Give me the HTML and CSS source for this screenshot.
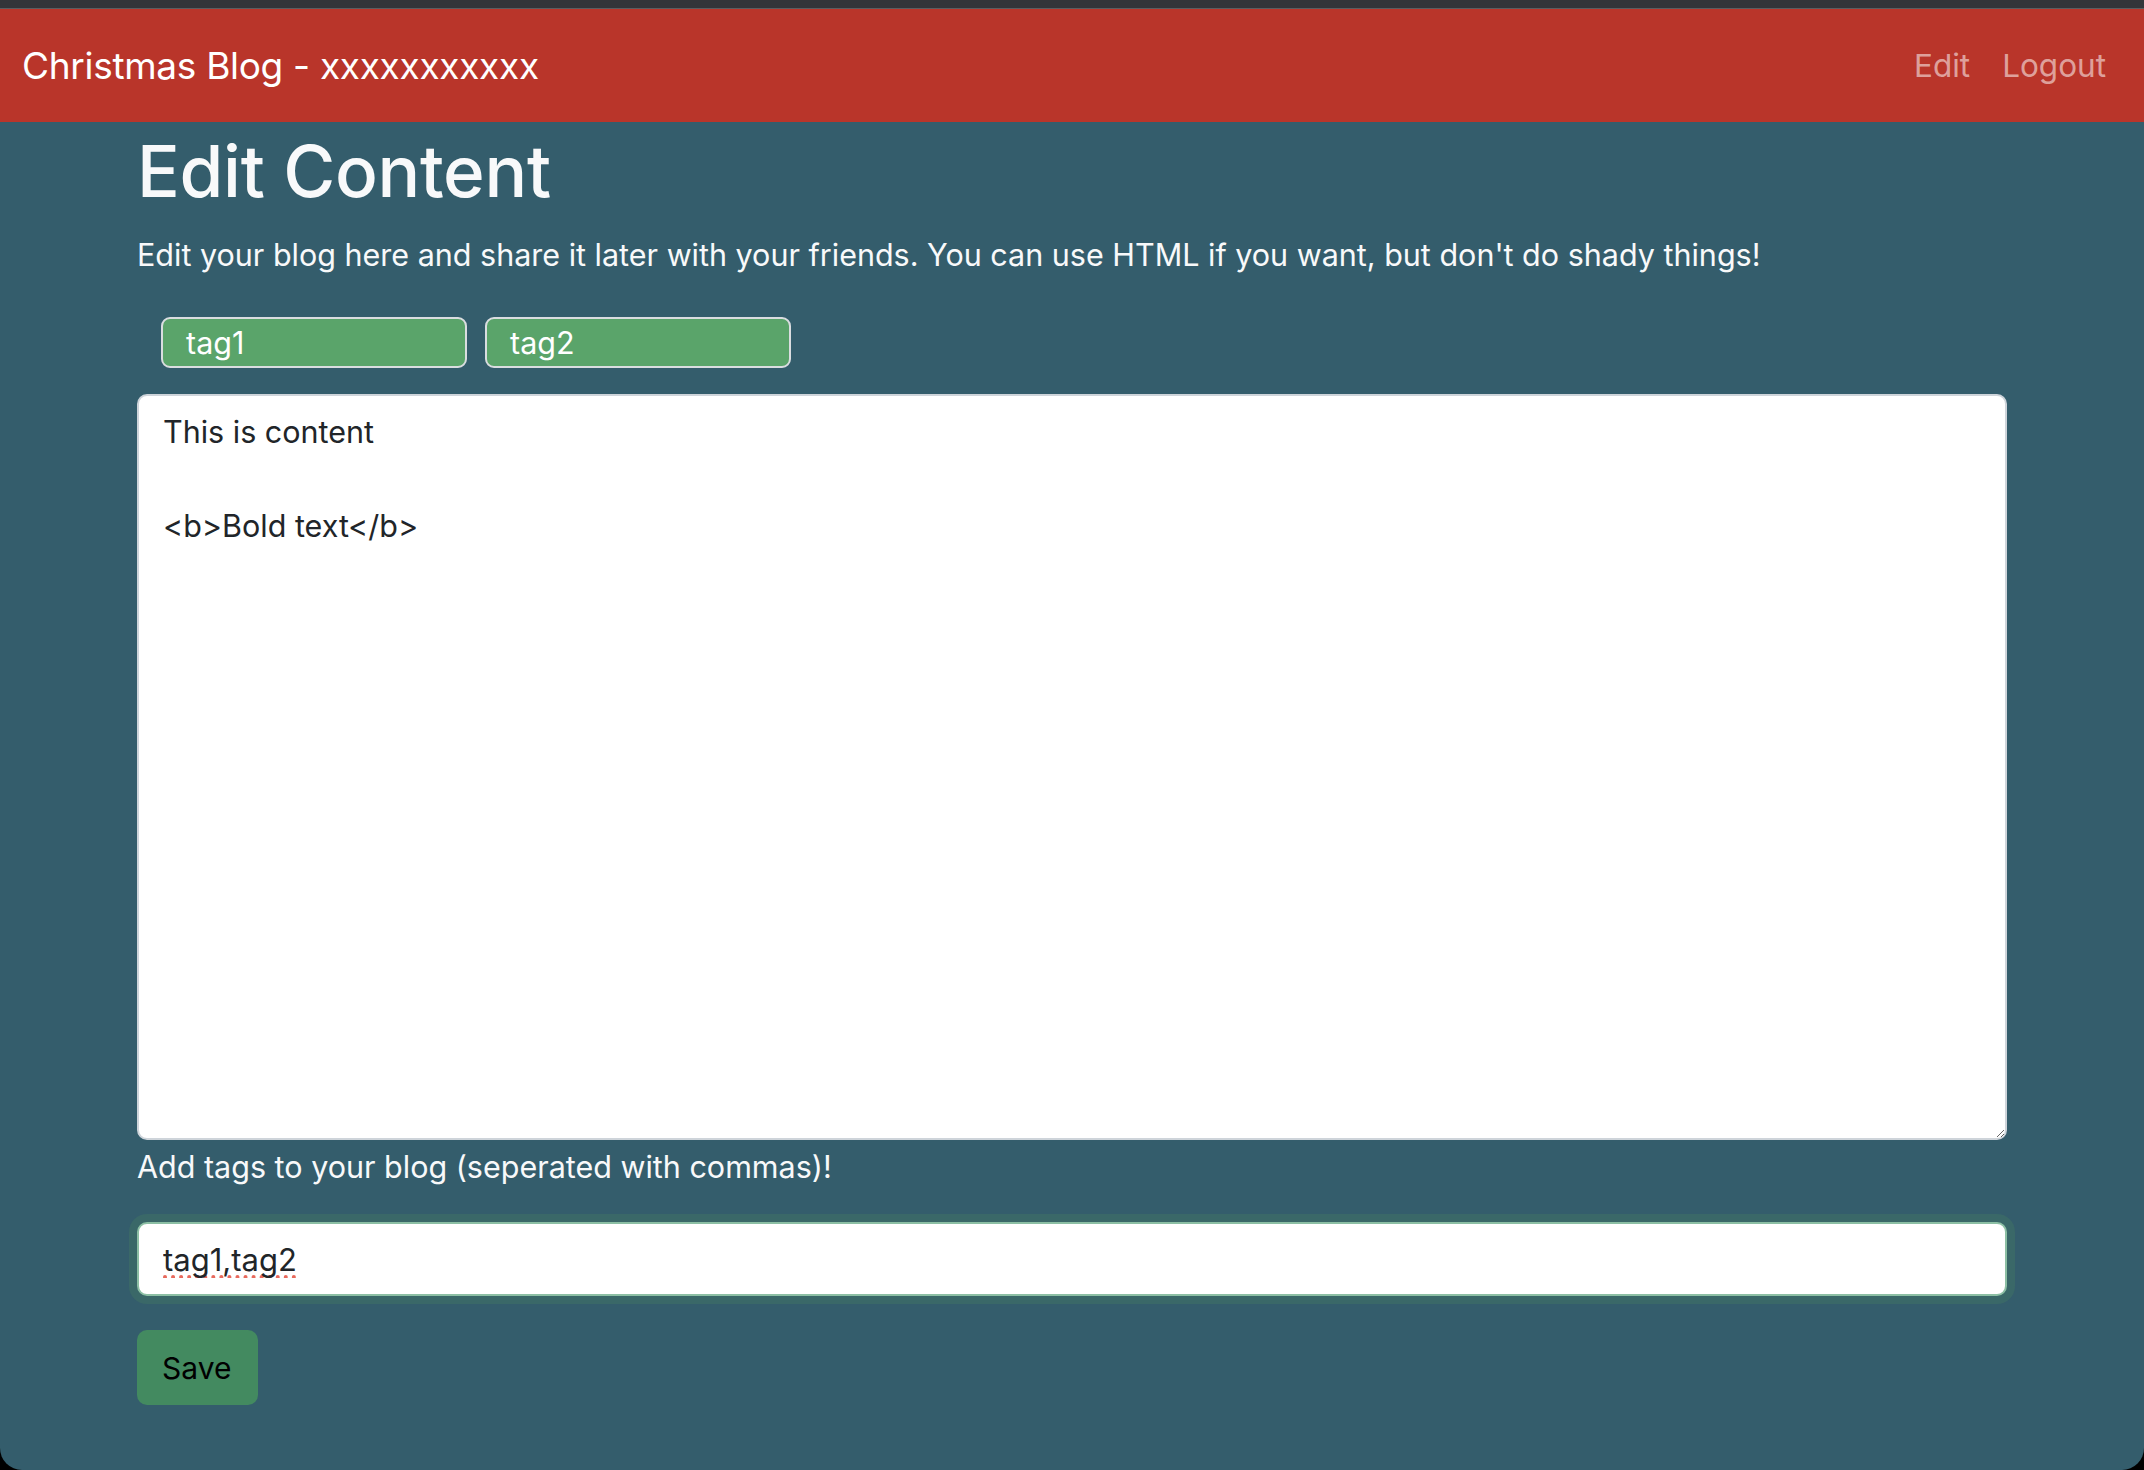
FILE: index.html
```html
<!DOCTYPE html>
<html>
<head>
	<meta charset="UTF-8">
	<title>Christmas Blog - Edit</title>
	<link rel="stylesheet" href="styles.css">
</head>
<body>
	<div class="window">
		<div class="chrome"></div>
		<nav class="navbar">
			<a class="brand" href="#">Christmas Blog - xxxxxxxxxxx</a>
			<ul class="links">
				<li><a href="#">Edit</a></li>
				<li><a href="#">Logout</a></li>
			</ul>
		</nav>

		<div class="container">
			<h1 class="title">Edit Content</h1>
			<p class="lead">Edit your blog here and share it later with your friends. You can use HTML if you want, but don't do shady things!</p>

			<div class="tags">
				<span class="tag">tag1</span>
				<span class="tag">tag2</span>
			</div>

			<form class="editor">
				<textarea class="content" spellcheck="false">This is content

&lt;b&gt;Bold text&lt;/b&gt;</textarea>
				<label class="hint" for="tags">Add tags to your blog (seperated with commas)!</label>
				<input class="tag-input" id="tags" type="text" value="tag1,tag2">
				<button class="save" type="button">Save</button>
			</form>
		</div>
	</div>
</body>
</html>
```

FILE: styles.css
```css
*{
	padding: 0;
	margin: 0;
	box-sizing: border-box;
}
html,body{
	background: #000;
}
body{
	font-family: Inter, "Noto Sans", sans-serif;
	color: #f8f9fa;
}
ul,li{
	list-style: none;
}
a{
	text-decoration: none;
}
.window{
	height: 1470px;
	background: #345d6c;
	border-radius: 0 0 22px 22px;
	overflow: hidden;
}
.chrome{
	height: 9px;
	background: #333539;
	border-bottom: 1px solid #5b5e61;
}
.navbar{
	height: 113px;
	background: #b9352a;
	display: flex;
	align-items: center;
	justify-content: space-between;
	padding: 0 38px 0 22px;
}
.brand{
	color: #fff;
	font-size: 37px;
	letter-spacing: -0.3px;
}
.links{
	display: flex;
	gap: 32px;
}
.links a{
	color: rgba(255,255,255,0.55);
	font-size: 31.5px;
}
.container{
	width: 1870px;
	margin-left: 137px;
}
.title{
	font-size: 71px;
	font-weight: 500;
	line-height: 79px;
	margin-top: 10px;
	letter-spacing: -0.3px;
}
.lead{
	font-size: 30.5px;
	line-height: 43px;
	margin-top: 22px;
}
.tags{
	display: flex;
	gap: 18px;
	margin: 41px 0 0 24px;
}
.tag{
	width: 306px;
	height: 51px;
	background: #5aa46a;
	border: 2px solid #dadde0;
	border-radius: 9px;
	color: #fff;
	font-size: 30.5px;
	line-height: 47px;
	padding-left: 23px;
}
.editor{
	display: flex;
	flex-direction: column;
	align-items: flex-start;
}
.content{
	width: 100%;
	height: 746px;
	margin-top: 26px;
	border: 2px solid #ced4da;
	border-radius: 10px;
	padding: 12px 24px;
	font-family: Inter, "Noto Sans", sans-serif;
	font-size: 30.5px;
	line-height: 47px;
	color: #212529;
	background: #fff;
	resize: vertical;
	outline: none;
}
.hint{
	font-size: 30.5px;
	line-height: 43px;
	margin-top: 5px;
}
.tag-input{
	width: 100%;
	height: 74px;
	margin-top: 34px;
	border: 2px solid #8cbfa4;
	border-radius: 10px;
	box-shadow: 0 0 0 8px #3a6868;
	padding: 0 24px;
	font-family: Inter, "Noto Sans", sans-serif;
	font-size: 31px;
	line-height: 60px;
	color: #212529;
	background: #fff;
	outline: none;
	text-decoration: underline dotted #e8695c;
	text-decoration-thickness: 4px;
	text-decoration-skip-ink: none;
	text-underline-offset: 5px;
}
.save{
	width: 121px;
	height: 75px;
	margin-top: 34px;
	border: none;
	border-radius: 10px;
	background: #438a60;
	color: #000;
	font-family: Inter, "Noto Sans", sans-serif;
	font-size: 30px;
	text-align: left;
	padding-left: 25px;
}
```
